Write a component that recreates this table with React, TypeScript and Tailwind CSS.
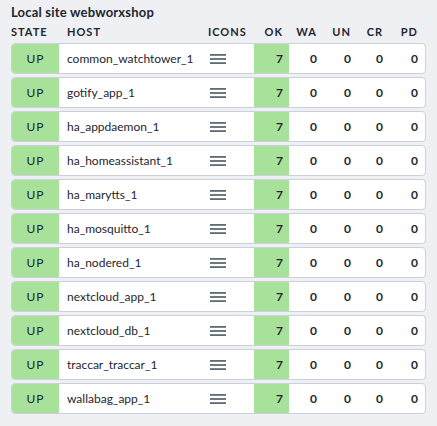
const hosts = [
  "common_watchtower_1",
  "gotify_app_1",
  "ha_appdaemon_1",
  "ha_homeassistant_1",
  "ha_marytts_1",
  "ha_mosquitto_1",
  "ha_nodered_1",
  "nextcloud_app_1",
  "nextcloud_db_1",
  "traccar_traccar_1",
  "wallabag_app_1",
];

const MenuIcon = () => (
  <svg width="16" height="10" viewBox="0 0 16 10" className="block">
    <rect x="0" y="0" width="16" height="1.8" fill="#5d6b73" />
    <rect x="0" y="4.1" width="16" height="1.8" fill="#5d6b73" />
    <rect x="0" y="8.2" width="16" height="1.8" fill="#5d6b73" />
  </svg>
);

const App = () => {
  return (
    <div
      className="w-[437px] h-[426px] bg-[#eff0f3] text-[#1e2630] px-[11px] pt-[4px]"
      style={{ fontFamily: "Lato, 'Open Sans', sans-serif" }}
    >
      <h2 className="text-[13px] font-bold leading-[16px] tracking-[0.2px]">Local site webworxshop</h2>

      {/* column headers */}
      <div className="flex h-[20px] items-center text-[11px] font-bold tracking-[1px] mt-[2px]">
        <div className="w-[48px]">STATE</div>
        <div className="w-[141px] pl-[8px]">HOST</div>
        <div className="w-[54px] pl-[8px]">ICONS</div>
        <div className="w-[35px] text-right pr-[6px]">OK</div>
        <div className="w-[34px] text-right pr-[6px]">WA</div>
        <div className="w-[34px] text-right pr-[6px]">UN</div>
        <div className="w-[32px] text-right pr-[6px]">CR</div>
        <div className="flex-1 text-right pr-[8px]">PD</div>
      </div>

      <div className="flex flex-col gap-[3px] mt-[1px]">
        {hosts.map((h) => (
          <div
            key={h}
            className="flex h-[31px] items-stretch bg-white border border-[#cdd0db] rounded-[4px] overflow-hidden text-[12px]"
          >
            <div className="w-[47px] bg-[#a8e29a] flex items-center justify-center tracking-[1px]">UP</div>
            <div className="w-[141px] flex items-center pl-[8px]">{h}</div>
            <div className="w-[54px] flex items-center pl-[10px]">
              <MenuIcon />
            </div>
            <div className="w-[35px] bg-[#a8e29a] flex items-center justify-end pr-[6px] font-bold">7</div>
            <div className="w-[34px] flex items-center justify-end pr-[6px] font-bold">0</div>
            <div className="w-[34px] flex items-center justify-end pr-[6px] font-bold">0</div>
            <div className="w-[32px] flex items-center justify-end pr-[6px] font-bold">0</div>
            <div className="flex-1 flex items-center justify-end pr-[7px] font-bold">0</div>
          </div>
        ))}
      </div>
    </div>
  );
};

export default App;
